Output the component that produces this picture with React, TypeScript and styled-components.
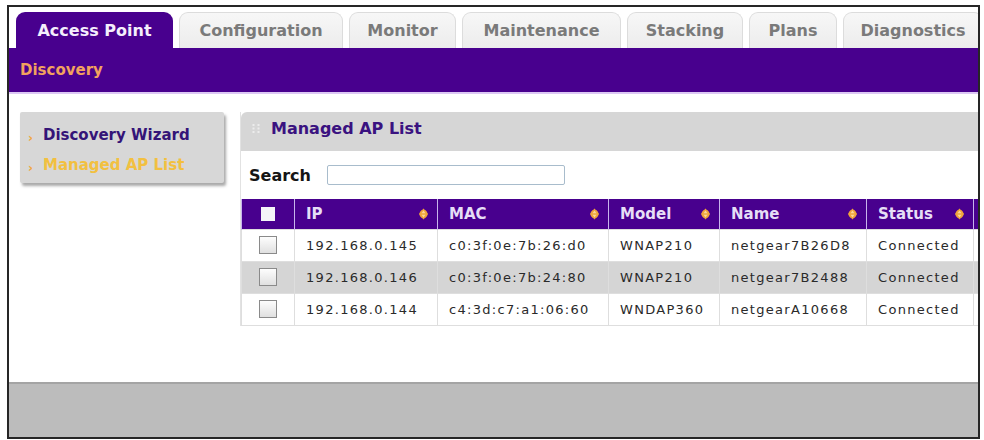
import React from 'react';
import styled, { createGlobalStyle } from 'styled-components';

const GlobalStyle = createGlobalStyle`
  body {
    margin: 0;
    background: #ffffff;
    font-family: "DejaVu Sans", Verdana, sans-serif;
  }
`;

const Frame = styled.div`
  margin: 5px 0 0 7px;
  width: 973px;
  height: 434px;
  border: 2px solid #262626;
  box-sizing: border-box;
  display: flex;
  flex-direction: column;
  overflow: hidden;
  background: #ffffff;
`;

const TabBar = styled.div`
  height: 41px;
  display: flex;
  align-items: flex-end;
  gap: 6px;
  padding-left: 7px;
  box-sizing: border-box;
  flex-shrink: 0;
`;

const Tab = styled.div<{ $active?: boolean; $w: number }>`
  width: ${(p) => p.$w}px;
  flex-shrink: 0;
  height: 36px;
  box-sizing: border-box;
  border-radius: 9px 9px 0 0;
  display: flex;
  align-items: center;
  justify-content: center;
  font-weight: bold;
  font-size: 16px;
  background: ${(p) => (p.$active ? '#48008e' : 'linear-gradient(#f7f7f7, #ececec)')};
  color: ${(p) => (p.$active ? '#f4eefc' : '#7a7a7a')};
  border: ${(p) => (p.$active ? 'none' : '1px solid #dcdcdc')};
  border-bottom: none;
`;

const SubBar = styled.div`
  height: 44px;
  background: #48008e;
  border-bottom: 2px solid #dcc8f4;
  display: flex;
  align-items: center;
  padding-left: 11px;
  flex-shrink: 0;
  font-size: 15px;
  font-weight: bold;
  color: #f2a25e;
`;

const Content = styled.div`
  flex: 1;
  display: flex;
  align-items: flex-start;
  padding: 18px 0 0 11px;
`;

const Sidebar = styled.div`
  width: 204px;
  height: 71px;
  flex-shrink: 0;
  box-sizing: border-box;
  background: #d7d7d7;
  border-radius: 2px;
  box-shadow: 2px 3px 3px #a9a9a9;
  padding: 12px 0 0 8px;
  display: flex;
  flex-direction: column;
  gap: 9px;
`;

const SideItem = styled.div<{ $current?: boolean }>`
  display: flex;
  align-items: center;
  gap: 10px;
  font-size: 15px;
  font-weight: bold;
  color: ${(p) => (p.$current ? '#f2c040' : '#341478')};
`;

const Chevron = styled.span`
  color: #f0a640;
  font-size: 12px;
  padding-top: 7px;
`;

const Panel = styled.div`
  margin-left: 16px;
  flex: 1;
  border-left: 1px solid #e2e2e2;
`;

const PanelHeader = styled.div`
  height: 39px;
  background: #d6d6d6;
  border-radius: 6px 0 0 0;
  display: flex;
  align-items: center;
  gap: 10px;
  padding: 0 0 6px 11px;
  box-sizing: border-box;
  font-size: 16px;
  font-weight: bold;
  color: #3a1280;
`;

const SearchRow = styled.div`
  height: 48px;
  display: flex;
  align-items: center;
  padding-left: 8px;
  font-size: 16px;
  font-weight: bold;
  color: #151515;
`;

const SearchInput = styled.input`
  margin-left: 16px;
  width: 238px;
  height: 20px;
  box-sizing: border-box;
  border: 1px solid #a8bccc;
  border-radius: 2px;
  background: #ffffff;
`;

const Table = styled.table`
  border-collapse: collapse;
  table-layout: fixed;
  width: 745px;
`;

const Th = styled.th<{ $w: number }>`
  width: ${(p) => p.$w}px;
  height: 30px;
  padding: 0 8px 0 11px;
  box-sizing: border-box;
  background: #48008e;
  border-left: 1px solid #c8b4ec;
  border-right: 1px solid #c8b4ec;
  color: #e6def6;
  font-size: 15px;
  font-weight: bold;
  text-align: left;
`;

const ThInner = styled.div`
  display: flex;
  align-items: center;
  justify-content: space-between;
`;

const Row = styled.tr<{ $alt?: boolean }>`
  background: ${(p) => (p.$alt ? '#d5d5d5' : '#ffffff')};
`;

const Td = styled.td<{ $center?: boolean }>`
  height: 31px;
  padding: 0 0 0 11px;
  border: 1px solid #dedede;
  font-size: 13px;
  letter-spacing: 1.3px;
  color: #2a2a2a;
  white-space: nowrap;
  overflow: hidden;
  text-align: ${(p) => (p.$center ? 'center' : 'left')};
  ${(p) => (p.$center ? 'padding: 0;' : '')}
`;

const HeadBox = styled.span`
  display: inline-block;
  width: 14px;
  height: 14px;
  background: #f4f4f8;
  vertical-align: middle;
`;

const RowBox = styled.span`
  display: inline-block;
  width: 18px;
  height: 18px;
  box-sizing: border-box;
  border: 1px solid #8a8a8a;
  background: linear-gradient(#fdfdfd, #e0e0e0);
  vertical-align: middle;
`;

const Footer = styled.div`
  height: 55px;
  flex-shrink: 0;
  background: #bcbcbc;
  border-top: 2px solid #a4a4a4;
  box-sizing: border-box;
`;

const SortIcon = () => (
  <svg width="11" height="12" viewBox="0 0 11 12">
    <path d="M5.5 0.5 L10 6 L5.5 11.5 L1 6 Z" fill="#f0a43a" />
    <ellipse cx="5.5" cy="6" rx="4" ry="4.3" fill="#f0a43a" />
    <path d="M5.5 2.6 L7.5 5.2 H3.5 Z" fill="#fbd79a" />
    <path d="M5.5 9.4 L7.5 6.8 H3.5 Z" fill="#fbd79a" />
  </svg>
);

const Grip = () => (
  <svg width="9" height="9" viewBox="0 0 9 9">
    {[1, 4.5, 8].map((y) =>
      [1.5, 6.5].map((x) => <rect key={`${x}-${y}`} x={x - 1} y={y - 1} width="2" height="2" fill="#ececec" />)
    )}
  </svg>
);

const tabs = [
  { label: 'Access Point', w: 157, active: true },
  { label: 'Configuration', w: 164 },
  { label: 'Monitor', w: 107 },
  { label: 'Maintenance', w: 159 },
  { label: 'Stacking', w: 116 },
  { label: 'Plans', w: 88 },
  { label: 'Diagnostics', w: 140 },
];

const columns = [
  { label: 'IP', w: 143 },
  { label: 'MAC', w: 171 },
  { label: 'Model', w: 111 },
  { label: 'Name', w: 147 },
  { label: 'Status', w: 107 },
];

const rows = [
  ['192.168.0.145', 'c0:3f:0e:7b:26:d0', 'WNAP210', 'netgear7B26D8', 'Connected'],
  ['192.168.0.146', 'c0:3f:0e:7b:24:80', 'WNAP210', 'netgear7B2488', 'Connected'],
  ['192.168.0.144', 'c4:3d:c7:a1:06:60', 'WNDAP360', 'netgearA10668', 'Connected'],
];

export default function App() {
  return (
    <>
      <GlobalStyle />
      <Frame>
        <TabBar>
          {tabs.map((t) => (
            <Tab key={t.label} $w={t.w} $active={t.active}>
              {t.label}
            </Tab>
          ))}
        </TabBar>
        <SubBar>Discovery</SubBar>
        <Content>
          <Sidebar>
            <SideItem>
              <Chevron>›</Chevron>Discovery Wizard
            </SideItem>
            <SideItem $current>
              <Chevron>›</Chevron>Managed AP List
            </SideItem>
          </Sidebar>
          <Panel>
            <PanelHeader>
              <Grip />
              Managed AP List
            </PanelHeader>
            <SearchRow>
              Search
              <SearchInput type="text" />
            </SearchRow>
            <Table>
              <thead>
                <tr>
                  <Th $w={53} style={{ padding: 0, textAlign: 'center' }}>
                    <HeadBox />
                  </Th>
                  {columns.map((c) => (
                    <Th key={c.label} $w={c.w}>
                      <ThInner>
                        {c.label}
                        <SortIcon />
                      </ThInner>
                    </Th>
                  ))}
                  <Th $w={13} />
                </tr>
              </thead>
              <tbody>
                {rows.map((r, i) => (
                  <Row key={r[0]} $alt={i === 1}>
                    <Td $center>
                      <RowBox />
                    </Td>
                    {r.map((cell) => (
                      <Td key={cell}>{cell}</Td>
                    ))}
                    <Td />
                  </Row>
                ))}
              </tbody>
            </Table>
          </Panel>
        </Content>
        <Footer />
      </Frame>
    </>
  );
}
